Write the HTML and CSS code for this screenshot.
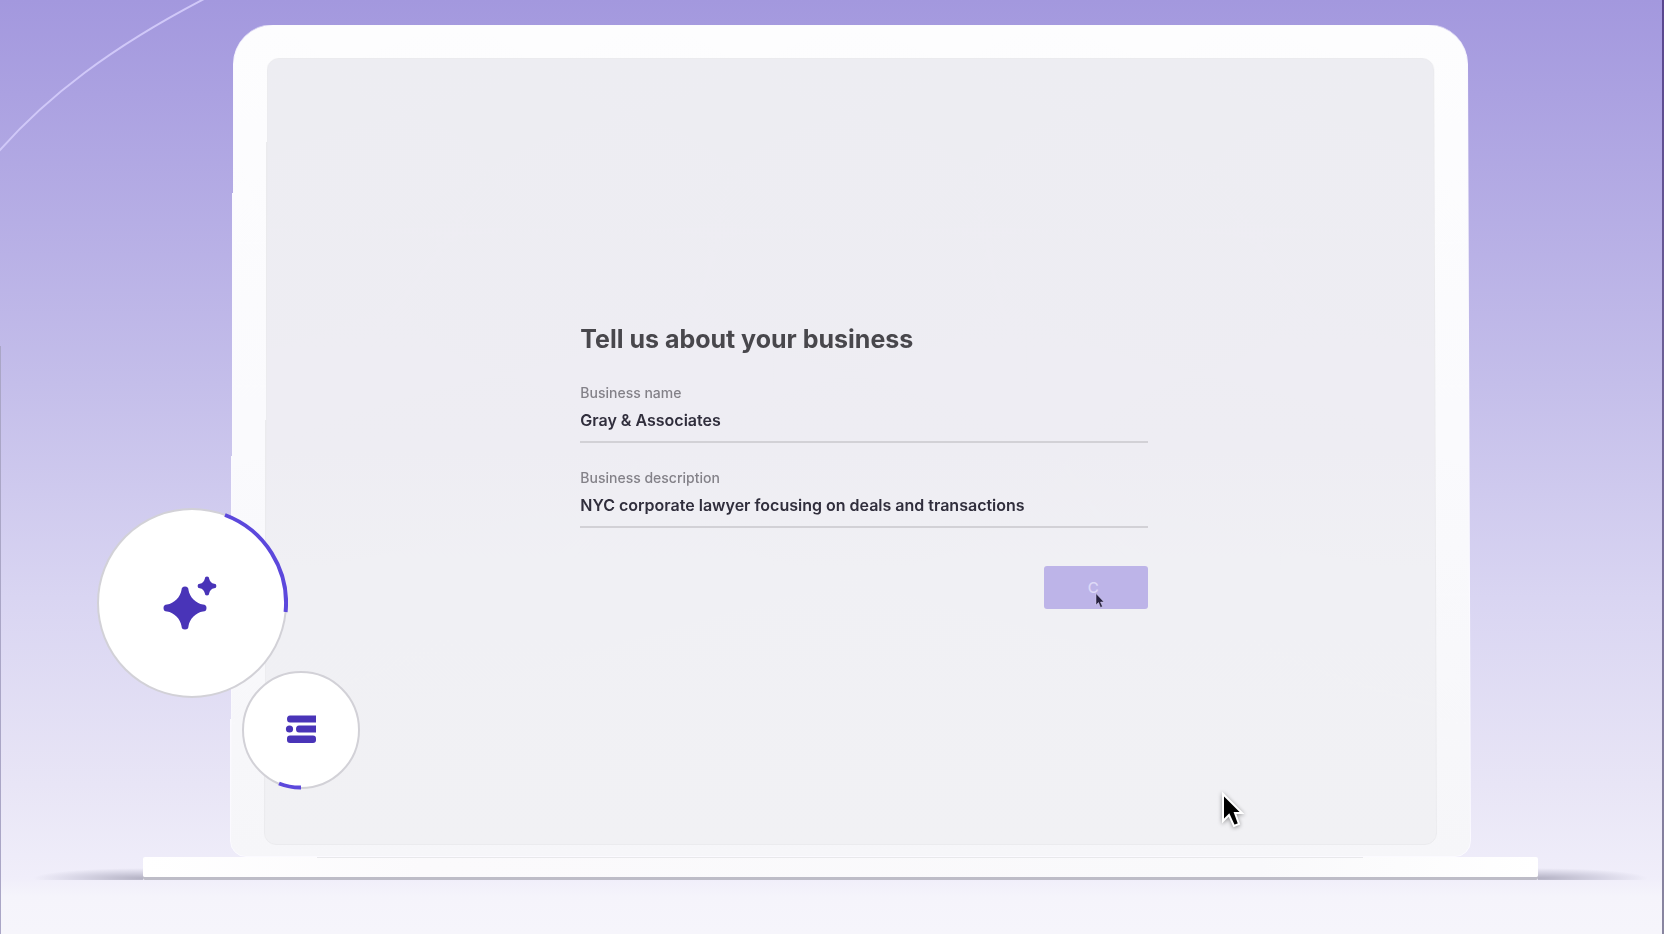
FILE: index.html
```html
<!DOCTYPE html>
<html lang="en">
<head>
  <meta charset="UTF-8">
  <meta name="viewport" content="width=device-width, initial-scale=1.0">
  <title>Tell us about your business</title>
  <link rel="stylesheet" href="styles.css">
</head>
<body>
  <main class="stage">
    <svg class="orbit" viewBox="0 0 206 152" aria-hidden="true">
      <path d="M-1 151 C48 96 110 48 204 -1" />
    </svg>

    <div class="laptop-lid">
      <div class="screen">
        <form class="business-form" onsubmit="return false">
          <h1 class="form-title">Tell us about your business</h1>
          <div class="field">
            <label for="business-name">Business name</label>
            <input id="business-name" type="text" value="Gray &amp; Associates">
          </div>
          <div class="field">
            <label for="business-desc">Business description</label>
            <input id="business-desc" type="text" value="NYC corporate lawyer focusing on deals and transactions">
          </div>
          <div class="form-actions">
            <button class="btn-continue" type="submit">C</button>
            <svg class="cursor-small" viewBox="0 0 20 32" aria-hidden="true">
              <path d="M2 2 V25 L7 20 L11 30 L15 28 L11 19 H18 Z" />
            </svg>
          </div>
        </form>
      </div>
    </div>
    <div class="laptop-base">
      <div class="hinge"></div>
    </div>

    <!-- AI badge -->
    <svg class="badge badge-ai" viewBox="0 0 192 192" aria-hidden="true">
      <circle class="disc" cx="96" cy="96" r="94" />
      <path class="progress" d="M129 8 A94 94 0 0 1 189.6 105" />
      <path class="icon" transform="translate(89 101)" d="M-3.5 -18 A3.5 3.5 0 0 1 3.5 -18 C4.5 -11 11 -4.5 18 -3.5 A3.5 3.5 0 0 1 18 3.5 C11 4.5 4.5 11 3.5 18 A3.5 3.5 0 0 1 -3.5 18 C-4.5 11 -11 4.5 -18 3.5 A3.5 3.5 0 0 1 -18 -3.5 C-11 -4.5 -4.5 -11 -3.5 -18 Z" />
      <path class="icon" transform="translate(111 79)" d="M-2.2 -7.2 A2.2 2.2 0 0 1 2.2 -7.2 C2.7 -4.5 4.5 -2.7 7.2 -2.2 A2.2 2.2 0 0 1 7.2 2.2 C4.5 2.7 2.7 4.5 2.2 7.2 A2.2 2.2 0 0 1 -2.2 7.2 C-2.7 4.5 -4.5 2.7 -7.2 2.2 A2.2 2.2 0 0 1 -7.2 -2.2 C-4.5 -2.7 -2.7 -4.5 -2.2 -7.2 Z" />
    </svg>

    <!-- form badge -->
    <svg class="badge badge-list" viewBox="0 0 120 120" aria-hidden="true">
      <circle class="disc" cx="60" cy="60" r="58" />
      <path class="progress" d="M38 113.5 A58 58 0 0 0 60 117.5" />
      <path class="icon" d="M75 45.5 H49 Q46 45.5 46 49 Q46 52.5 49 52.5 H75 Z" />
      <circle class="icon" cx="48.5" cy="59" r="3.6" />
      <path class="icon" d="M75 55.5 H58 Q55 55.5 55 59 Q55 62.5 58 62.5 H75 Z" />
      <rect class="icon" x="46" y="65.5" width="29" height="7.5" rx="3" />
    </svg>

    <svg class="cursor" viewBox="0 0 24 38" aria-hidden="true">
      <path d="M2 3 V30 L8 24 L13 35 L18 33 L14 22 H21 Z" />
    </svg>
  </main>
</body>
</html>
```
FILE: styles.css
```css
* {
  box-sizing: border-box;
}
body {
  margin: 0;
  font-family: Inter, "Liberation Sans", sans-serif;
}
.stage {
  position: relative;
  display: flex;
  flex-direction: column;
  min-height: 100vh;
  padding: 24px 0 57px;
  overflow: hidden;
  border-bottom: 1px solid #c3c1d0;
  background: linear-gradient(#a398de 0%, #aba1e1 10%, #c4beea 41%, #d9d5f2 64%, #e8e5f6 84%, #f0eefa 94%, #f5f4fb 96%, #f6f5fb 100%);
}
/* edges of the frame */
.stage::before {
  content: '';
  position: absolute;
  left: 0; top: 37%; bottom: 0;
  width: 1px;
  background: #aaa6c6;
}
.stage::after {
  content: '';
  position: absolute;
  right: 0; top: 0; bottom: 0;
  width: 2px;
  background: linear-gradient(#59468f, #8986a0);
}
.orbit {
  position: absolute;
  left: 0; top: 0;
  width: 206px; height: 152px;
}
.orbit path {
  fill: none;
  stroke: #d0c8f8;
  stroke-width: 2;
}

/* laptop */
.laptop-lid {
  position: relative;
  flex: 1;
  display: flex;
  width: 74.6%;
  margin-left: 13.8%;
  padding: 34px 34px 12px;
}
.laptop-lid::before {
  content: '';
  position: absolute;
  inset: -4px 0 0;
  border: 1px solid #fbfaff;
  border-radius: 40px 40px 16px 16px;
  background: linear-gradient(#fdfdfe, #fafafd 50%, #f6f6f9);
  transform: perspective(4000px) rotateX(1.4deg);
  transform-origin: 50% 100%;
}
.screen {
  position: relative;
  flex: 1;
  padding: 265px 0 236px 28px;
}
.screen::before {
  content: '';
  position: absolute;
  inset: -4px 0 0;
  border: 1px solid #ebebee;
  border-radius: 12px;
  background: linear-gradient(#ededf2, #eeedf3 50%, #f0f0f4 65%, #f1f1f4);
  transform: perspective(4000px) rotateX(1.4deg);
  transform-origin: 50% 100%;
}
.laptop-base {
  position: relative;
  width: 83.8%;
  height: 20px;
  margin-left: 8.6%;
  border-radius: 2px;
  background: linear-gradient(90deg, #ffffff, #fbfafc 20%, #f9f9fb 80%, #ffffff);
  box-shadow: 0 3px 0 #bdbcc7;
}
.laptop-base::before,
.laptop-base::after {
  content: '';
  position: absolute;
  bottom: -3px;
  width: 8%;
  height: 12px;
}
.laptop-base::before {
  right: 100%;
  background: radial-gradient(ellipse at 100% 85%, #b4b2c4, #d6d4e4 40%, transparent 70%);
}
.laptop-base::after {
  left: 100%;
  background: radial-gradient(ellipse at 0 85%, #b4b2c4, #d6d4e4 40%, transparent 70%);
}
.hinge {
  width: 75%;
  height: 1px;
  margin: 0 auto;
  background: #e8e8eb;
}

/* form */
.business-form {
  position: relative;
  width: 50%;
  max-width: 568px;
  margin: 0 auto;
}
.form-title {
  margin: 0 0 28px;
  font-size: 25px;
  line-height: 32px;
  font-weight: 650;
  color: #48474c;
}
.field {
  margin-bottom: 25px;
}
.field label {
  display: block;
  font-size: 14px;
  line-height: 20px;
  font-weight: 500;
  color: #838188;
}
.field input {
  display: block;
  width: 100%;
  height: 40px;
  padding: 0 0 4px;
  border: 0;
  border-bottom: 2px solid #d2d1d6;
  border-radius: 0;
  outline: 0;
  background: transparent;
  font-family: inherit;
  font-size: 16px;
  font-weight: 600;
  color: #302e3c;
}
.form-actions {
  position: relative;
  display: flex;
  justify-content: flex-end;
  padding-top: 13px;
}
.btn-continue {
  width: 104px;
  height: 43px;
  padding: 0 12px 0 6px;
  border: 0;
  border-radius: 3px;
  background: #bdb4e8;
  font-family: inherit;
  font-size: 15px;
  font-weight: 500;
  color: #ded9f7;
}
.cursor-small {
  position: absolute;
  right: 43px; bottom: 0;
  width: 10px; height: 17px;
}
.cursor-small path {
  fill: #26203f;
  stroke: #d9d3f3;
  stroke-width: 1;
}

/* badges */
.badge {
  position: absolute;
}
.badge-ai {
  left: 96px; top: 507px;
  width: 192px; height: 192px;
}
.badge-list {
  left: 241px; top: 670px;
  width: 120px; height: 120px;
}
.badge .disc {
  fill: #ffffff;
  stroke: #d2d1d7;
  stroke-width: 2;
}
.badge .progress {
  fill: none;
  stroke: #5c48dc;
  stroke-width: 4;
}
.badge .icon {
  fill: #4934b8;
}
.cursor {
  position: absolute;
  left: 1221px; top: 791px;
  width: 24px; height: 38px;
  filter: drop-shadow(0 1px 2px rgba(0, 0, 0, 0.4));
}
.cursor path {
  fill: #000000;
  stroke: #ffffff;
  stroke-width: 2;
}
```
